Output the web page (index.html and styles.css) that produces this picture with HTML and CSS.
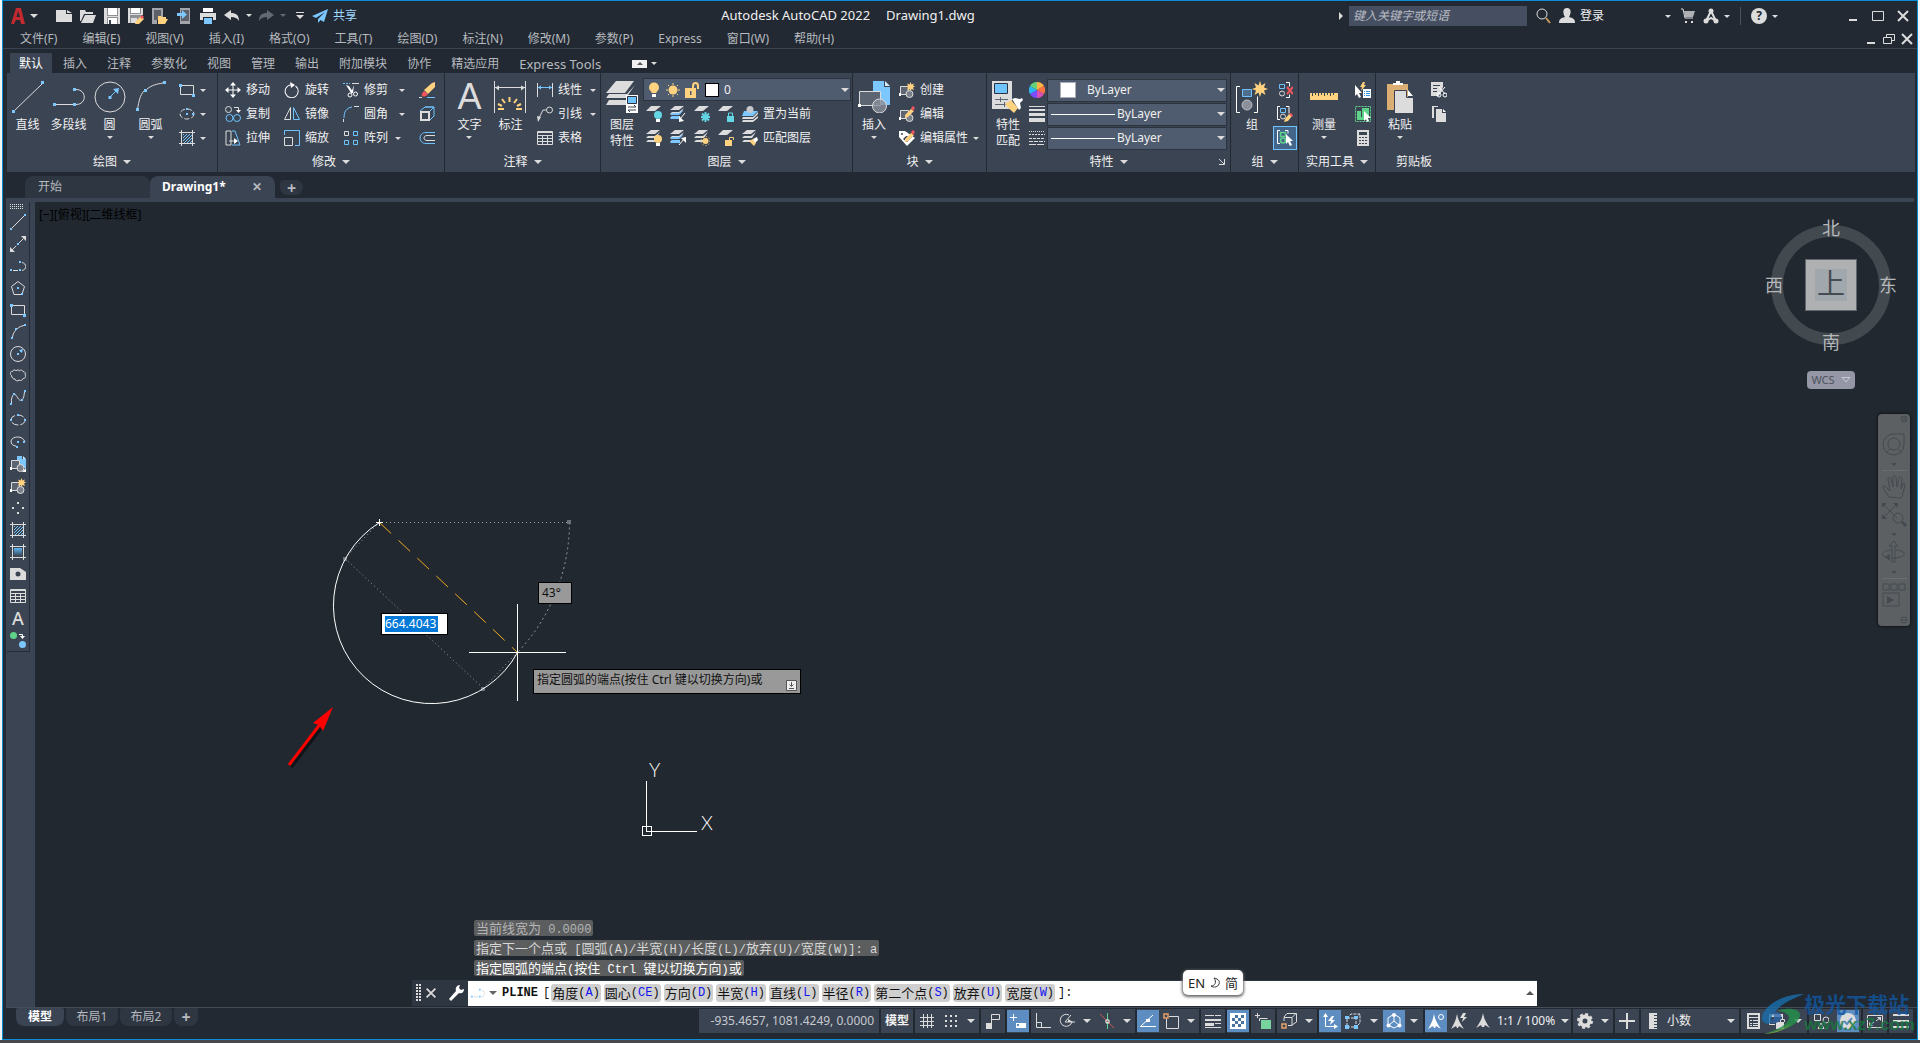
FILE: index.html
```html
<!DOCTYPE html>
<html lang="zh-CN">
<head>
<meta charset="utf-8">
<title>Autodesk AutoCAD 2022 - Drawing1.dwg</title>
<link rel="stylesheet" href="styles.css">
</head>
<body>
<svg class="sprite" aria-hidden="true">
  <defs>
    <linearGradient id="g-grad" x1="0" y1="0" x2="0" y2="1"><stop offset="0" stop-color="#5fb8f5"/><stop offset="1" stop-color="#3b4453"/></linearGradient>
    <pattern id="p-hatch" width="3" height="3" patternUnits="userSpaceOnUse"><path d="M-1 1 1-1M0 3 3 0M2 4 4 2" stroke="#7cc7ff" stroke-width="1"/></pattern>
  </defs>
  <!-- quick access -->
  <symbol id="new" viewBox="0 0 16 16"><path class="fw" d="M0 2h10v4h6v8H0z"/><path class="fw" d="M11 2l5 3h-5z"/></symbol>
  <symbol id="open" viewBox="0 0 16 16"><path class="fw" d="M0 2h5l1 2h7v2H4L1 13H0zM5 7h11l-3 8H1z"/></symbol>
  <symbol id="save" viewBox="0 0 16 16"><path fill="#8d9096" d="M0 0h16v16H0z"/><path class="ff" d="M4 0h9v7H4zM4 10h9v6H4z"/><path fill="#dcdcdc" d="M1 0h2v8h11V0h2v16h-2V9H3v7H0V0z"/><path fill="#3b4453" d="M5 12h2v4H5z"/></symbol>
  <symbol id="saveas" viewBox="0 0 16 16"><path fill="#8d9096" d="M0 0h15v6L9 15H0z"/><path class="ff" d="M3 0h9v5H3z"/><path fill="#dcdcdc" d="M0 0h2v6h11V0h2v7H2v8H0zM3 10h6v5H3z"/><path class="fy" d="M8 13l5-5 3 3-5 5-4 0z"/><path class="fr" d="M12 9l2-2 2 2-2 2z"/></symbol>
  <symbol id="opencloud" viewBox="0 0 16 16"><path class="fg" d="M0 0h11v9H5v7H0z"/><path fill="#5d6068" d="M2 2h7v10H2z"/><path class="fy" d="M6 8h3l1 1h4v2h2l-3 5H6z"/></symbol>
  <symbol id="savecloud" viewBox="0 0 16 16"><path class="fg" d="M4 0h10v16H4z"/><path fill="#5d6068" d="M5 2h8v11H5z"/><path class="fb" d="M1 5h5V2l5 4.500-5 4.500V8H1z"/></symbol>
  <symbol id="print" viewBox="0 0 16 16"><path class="ff" d="M3 0h10v4H3z"/><path class="fw" d="M0 5h16v7h-3V9H3v3H0z"/><path class="fb" d="M4 10h8v6H4z"/></symbol>
  <symbol id="undo" viewBox="0 0 16 16"><path class="fw" d="M0 7l7-5v3c5 0 8 2 8 8-2-3-4-4-8-4v3z"/></symbol>
  <symbol id="redo" viewBox="0 0 16 16"><path fill="#636973" d="M16 7L9 2v3c-5 0-8 2-8 8 2-3 4-4 8-4v3z"/></symbol>
  <symbol id="plane" viewBox="0 0 16 16"><path class="fb" d="M16 1L0 8l4 2L13 4 6 11v4l2.500-3L12 14z"/></symbol>
  <symbol id="appA" viewBox="0 0 16 16"><path fill="#c22a2f" d="M6 0h5l4 16h-4l-1-4H6l-2 4H1zM8 3l-1.500 6H10z"/></symbol>
  <symbol id="mag" viewBox="0 0 16 16"><circle class="s" cx="7" cy="6" r="5"/><path d="M11 10l4 5" stroke="#c9975a" stroke-width="2"/></symbol>
  <symbol id="user" viewBox="0 0 16 16"><path class="fw" d="M8 0c5 0 4 6 2 9 4 1 6 2 6 6H0c0-4 2-5 6-6C4 6 3 0 8 0z"/></symbol>
  <symbol id="cart" viewBox="0 0 16 16"><path class="s" d="M2 1h2l2 9h8"/><path fill="#aeb0b4" d="M5 3h11l-2 6H6z"/><path class="fw" d="M6 13h2v2H6zM12 13h2v2h-2z"/></symbol>
  <symbol id="apps" viewBox="0 0 16 16"><path d="M8 3L3 13M8 3l5 10M3 13l5-3 5 3" fill="none" stroke="#dcdcdc" stroke-width="2"/><circle class="fw" cx="8" cy="3" r="2.500"/><circle class="fw" cx="3" cy="13" r="2.500"/><circle class="fw" cx="13" cy="13" r="2.500"/></symbol>
  <symbol id="min" viewBox="0 0 16 16"><path class="fw" d="M4 11h8v2H4z"/></symbol>
  <symbol id="max" viewBox="0 0 16 16"><path class="s" d="M2.500 3.500h11v9h-11z"/></symbol>
  <symbol id="close" viewBox="0 0 16 16"><path class="s2" d="M3 3l10 10M13 3L3 13"/></symbol>
  <symbol id="restore" viewBox="0 0 16 16"><path class="s" d="M2.500 6.500h8v6h-8zM5.500 6V3.500h8v6H11"/></symbol>
  <!-- draw -->
  <symbol id="line" viewBox="0 0 32 32"><path class="s" d="M3 29L30 3"/><path class="fb" d="M0 29h3v3H0zM29 0h3v3h-3z"/></symbol>
  <symbol id="pline" viewBox="0 0 32 32"><path class="s" d="M3 23.500h17M23 8.500c11 0 11 15 0 15"/><path class="fb" d="M0 22h3v3H0zM20 22h3v3h-3zM20 7h3v3h-3z"/></symbol>
  <symbol id="circle" viewBox="0 0 32 32"><circle class="s" cx="16" cy="16" r="15"/><path class="b" d="M17 15l6-6"/><path class="fb" d="M25 7l-1 6-5-5zM14.500 15h3v3h-3z"/></symbol>
  <symbol id="arc" viewBox="0 0 32 32"><path class="s" d="M2.500 28C4 20 5 14 9 10M12 8C17 4 22 3 28 2"/><path class="fb" d="M1 27h3v3H1zM9 8h3v3H9zM28 0h3v3h-3z"/></symbol>
  <symbol id="rect" viewBox="0 0 16 16"><path class="s" d="M1.500 3.500h13v9h-13z"/><path class="fb" d="M0 2h3v3H0zM13 12h3v3h-3z"/></symbol>
  <symbol id="ellipse" viewBox="0 0 16 16"><ellipse class="s" cx="8" cy="8" rx="7" ry="5" stroke-dasharray="5 2"/><path class="fb" d="M7 7h2v2H7zM7 2h2v2H7zM13 7h2v2h-2z"/></symbol>
  <symbol id="hatch" viewBox="0 0 16 16"><path fill="url(#p-hatch)" d="M4 4h9v9H4z"/><path class="s" d="M2.500 0v16M13.500 0v16M0 2.500h16M0 13.500h16"/></symbol>
  <symbol id="grad" viewBox="0 0 16 16"><path fill="url(#g-grad)" d="M4 4h8v8H4z"/><path class="s" d="M2.500 0v16M13.500 0v16M0 2.500h16M0 13.500h16"/></symbol>
  <!-- modify -->
  <symbol id="move" viewBox="0 0 16 16"><path class="sf" d="M8 2v12M2 8h12"/><path class="ff" d="M8 0l3 3.500H5zM8 16l3-3.500H5zM0 8l3.500-3v6zM16 8l-3.500-3v6z"/></symbol>
  <symbol id="rotate" viewBox="0 0 16 16"><path class="sf" d="M10 3A6.500 6.500 0 1 1 5 3.500" transform="rotate(20 8 8)"/><path class="ff" d="M6 0l5 3-4 3z"/></symbol>
  <symbol id="trim" viewBox="0 0 16 16"><path class="b" d="M0 1.500h7" stroke-dasharray="2 1"/><path class="s" d="M9 1.500h7"/><path class="ff" d="M3 3l3 1 4 6-2 1zM11 3l-1 8H8z"/><circle class="sf" cx="7" cy="13" r="2"/><circle class="sf" cx="12.500" cy="12" r="2"/></symbol>
  <symbol id="erase" viewBox="0 0 16 16"><path class="b" d="M8 15.500h8"/><path class="s" d="M0 15.500h3"/><path class="fy" d="M16 0v5l-7 7-4-4 8-7z"/><path class="fr" d="M5 9l4 3c-2 3-5 3-6 2s0-3 2-5z"/></symbol>
  <symbol id="copy" viewBox="0 0 16 16"><circle class="s" cx="3.500" cy="3.500" r="3"/><circle class="b" cx="4.500" cy="12" r="3.500"/><circle class="b" cx="12" cy="12" r="3.500"/><path class="s" d="M9 1.500h4.500V5"/><path class="ff" d="M11 4h5l-2.500 3z"/></symbol>
  <symbol id="mirror" viewBox="0 0 16 16"><path class="s" d="M6.500 1.500v12h-6z"/><path class="b" d="M9.500 1.500v12h6z"/></symbol>
  <symbol id="fillet" viewBox="0 0 16 16"><path class="b" d="M1 12C1 6 3 2 9 1"/><path class="s" d="M11 .5h5M.5 13v3"/></symbol>
  <symbol id="explode" viewBox="0 0 16 16"><path class="b" d="M1 5l5-4h9v9l-4 4M11 5l4-4M6 1h9"/><path class="s2" d="M2 6h8v8H2z"/></symbol>
  <symbol id="stretch" viewBox="0 0 16 16"><path class="s" d="M1 1h5v14H1zM4 11h6"/><path class="ff" d="M9 8l4 3-4 3z"/><path class="b" d="M7 1h3l5 14H7" /></symbol>
  <symbol id="scale" viewBox="0 0 16 16"><path class="b" d="M.5 5V.5h15v15H11"/><path class="s" d="M.5 7.500h8v8h-8z"/></symbol>
  <symbol id="array" viewBox="0 0 16 16"><path class="s" d="M1.500 1.500h4v4h-4z"/><path class="b" d="M10.500 1.500h4v4h-4zM1.500 10.500h4v4h-4zM10.500 10.500h4v4h-4z"/></symbol>
  <symbol id="offset" viewBox="0 0 16 16"><path class="b" d="M16 2.500H7C-1 2.500-1 13.500 7 13.500h9"/><path class="s" d="M16 5.500H8c-4 0-4 5 0 5h8"/></symbol>
  <!-- annotate -->
  <symbol id="dim" viewBox="0 0 32 32"><path class="s" d="M.5 0v32M31.500 0v32M1 6.500h30"/><path class="fw" d="M1 6.500l4-2v5zM31 6.500l-4-2v5z"/><path d="M15.500 16v5M8 18l3 4M23 18l-3 4M4 23l4 2M27 23l-4 2M4 28h6M22 28h6" stroke="#ffd280" stroke-width="2"/></symbol>
  <symbol id="lin" viewBox="0 0 16 16"><path class="s" d="M.5 1v14M15.500 1v14"/><path class="b" d="M1 5.500h14"/><path class="fb" d="M1 5.500l3-2v4zM15 5.500l-3-2v4z"/></symbol>
  <symbol id="leader" viewBox="0 0 16 16"><circle class="s" cx="12.500" cy="4" r="3"/><path class="s" d="M9 4H6L2 12"/><path class="fw" d="M0 10l4 1-3 5z"/></symbol>
  <symbol id="table" viewBox="0 0 16 16"><path class="s" d="M.5 1.500h15v13H.5zM0 5.500h16M0 8.500h16M0 11.500h16M5.500 5v9M10.500 5v9"/><path class="fw" d="M1 2h14v1H1z"/></symbol>
  <!-- layers -->
  <symbol id="layers" viewBox="0 0 32 32"><path class="fw" d="M10 0h18l-9 12H0zM3 13h18l8-9-9 13H0zM3 19h18v5H0z"/><path class="ff" d="M20 14h12v18H20z"/><path fill="#6fc3ff" stroke="#2b3340" d="M21.500 15.500h9v7h-9z"/><path d="M22 26h8l-2-2M30 29h-8l2 2" fill="none" stroke="#3b4453"/></symbol>
  <symbol id="ly" viewBox="0 0 16 16"><path class="fw" d="M5 0h10l-6 5H0z"/></symbol>
  <symbol id="ly3" viewBox="0 0 16 16"><path class="fw" d="M5 0h9L9 4H0zM2 6h7l5-4-4 6H0zM2 10h7v2H0z"/></symbol>
  <symbol id="ly1" viewBox="0 0 16 16"><use href="#ly"/><circle fill="#63d5e3" cx="12" cy="9" r="4"/><path class="ff" d="M10 13h4v3h-4z"/></symbol>
  <symbol id="ly2" viewBox="0 0 16 16"><use href="#ly3"/><path class="fb" d="M2 7h7l4-3v1L9 9H0zM2 10h8v3H0z"/><path class="sf" d="M15 7l-5 6"/><path class="ff" d="M9 10v6l5-1z"/></symbol>
  <symbol id="ly4" viewBox="0 0 16 16"><use href="#ly"/><path d="M11.500 6v10M7 11h9M8 7.500l7 7M15 7.500l-7 7" stroke="#63d5e3" stroke-width="2"/></symbol>
  <symbol id="ly5" viewBox="0 0 16 16"><use href="#ly"/><path fill="#63d5e3" d="M9 10h7v6H9z"/><path fill="none" stroke="#63d5e3" d="M10.500 10V7h4v3"/></symbol>
  <symbol id="ly6" viewBox="0 0 16 16"><path class="fb" d="M2 5h14l-5 5H0z"/><path class="fw" d="M1 11h10l5-5v2l-5 5H0zM1 14h10l5-4v2l-5 4H0z"/><circle fill="#c4c7cc" cx="8" cy="3.500" r="3.500"/></symbol>
  <symbol id="ly7" viewBox="0 0 16 16"><use href="#ly3"/><circle class="fy" cx="12" cy="9" r="4"/><path class="ff" d="M10 13h4v3h-4z"/></symbol>
  <symbol id="ly8" viewBox="0 0 16 16"><use href="#ly3"/><path class="fb" d="M2 7h7l4-3v1L9 9H0zM2 10h8v3H0z"/><path class="sf" d="M9 15l5-6"/><path class="ff" d="M16 7v6l-5-5z"/></symbol>
  <symbol id="ly9" viewBox="0 0 16 16"><use href="#ly3"/><circle class="fy" cx="11.500" cy="11" r="3"/><circle cx="11.500" cy="11" r="4.500" fill="none" stroke="#ffd280" stroke-dasharray="1 2"/></symbol>
  <symbol id="ly10" viewBox="0 0 16 16"><use href="#ly"/><path class="fy" d="M7 10h7v6H7z"/><path fill="none" stroke="#ffd280" d="M11.500 10V7.500h4V10"/></symbol>
  <symbol id="ly11" viewBox="0 0 16 16"><use href="#ly3"/><path class="fy" d="M7 11l4-2 3 4-2 3z"/><path class="ff" d="M11 9l4-2 1 3-3 3z"/></symbol>
  <symbol id="bulb" viewBox="0 0 16 16"><circle class="fy" cx="8" cy="5.500" r="5"/><path class="fy" d="M5.500 9h5v2h-5z"/><path class="ff" d="M6 12h4v3H6z"/></symbol>
  <symbol id="sun" viewBox="0 0 16 16"><circle class="fy" cx="8" cy="8" r="4.500"/><path d="M8 1v2M8 13v2M1 8h2M13 8h2M3 3l1 1M12 12l1 1M13 3l-1 1M4 12l-1 1" stroke="#ffd280" stroke-width="1"/></symbol>
  <symbol id="unlock" viewBox="0 0 16 16"><path class="fy" d="M1 6h11v10H1z"/><path d="M9 6V4c0-4 5-4 5 0v3" fill="none" stroke="#ffd280" stroke-width="2"/><path fill="#4f5b6e" d="M6 9h1.500v4H6z"/></symbol>
  <!-- blocks -->
  <symbol id="insert" viewBox="0 0 32 32"><path class="fb" d="M15 0h11v6h6v18H15z"/><path fill="#d3ebff" d="M27 0l5 5h-5z"/><path fill="#5d6573" stroke="#dcdcdc" d="M1.500 10.500h21v14h-21z"/><circle fill="#8b909a" fill-opacity=".8" stroke="#dcdcdc" cx="21.500" cy="25" r="7"/><path class="ff" d="M0 23h3v3H0z"/></symbol>
  <symbol id="blk" viewBox="0 0 16 16"><path fill="#5d6573" stroke="#dcdcdc" d="M1.500 4.500h8v8h-8z"/><circle fill="#7a808a" stroke="#dcdcdc" cx="10.500" cy="12" r="3.500"/><path class="ff" d="M0 11h2v3H0z"/></symbol>
  <symbol id="bcreate" viewBox="0 0 16 16"><use href="#blk"/><path class="fy" d="M11.500 0l1 2.500L15 1.500l-1 2 2 1-2 1 1 2.500-2.500-1-1 2-1-2-2.500 1 1-2.500-2-1 2-1-1-2 2.500 1z"/></symbol>
  <symbol id="bedit" viewBox="0 0 16 16"><use href="#blk"/><path class="fy" d="M6 9l6-6 3 2-6 6-3 1z"/><path class="fr" d="M12 2l2-2 2 2-2 3z"/></symbol>
  <symbol id="battr" viewBox="0 0 16 16"><path class="ff" d="M0 1h6l10 7-8 8-8-9z"/><circle fill="#3b4453" cx="3" cy="4" r="1"/><path fill="#3b4453" d="M4 9l3-3 6 1-5 5z"/><path class="fy" d="M6 9l6-6 3 2-6 6-3 1z"/><path class="fr" d="M12 2l2-2 2 2-2 3z"/></symbol>
  <symbol id="binsert" viewBox="0 0 16 16"><path class="fb" d="M7 0h5v3h4v9H9V5H7z"/><path fill="#d3ebff" d="M13 0l3 3h-3z"/><use href="#blk"/><path class="ff" d="M16 12v4h-4z"/></symbol>
  <!-- properties -->
  <symbol id="match" viewBox="0 0 32 32"><path class="fw" d="M0 0h20v28H0z"/><path fill="#6fc3ff" stroke="#2b3340" d="M2.500 2.500h13v10h-13z"/><path d="M3 18.500h13M3 23.500h13M8.500 16v5M12.500 21v5" stroke="#5d6573"/><path class="fy" d="M13 23l6-4 7 8-4 5c-3-3-6-5-9-9z"/><path class="ff" d="M20 18l3-1 5 1 2-1 1 2-3 3 1 5-2 2z"/></symbol>
  <symbol id="wheel" viewBox="0 0 16 16"><path fill="#ffb347" d="M8 8V0a8 8 0 0 1 7 4z"/><path fill="#ff7043" d="M8 8l7-4a8 8 0 0 1 0 8z"/><path fill="#d94fb5" d="M8 8l7 4a8 8 0 0 1-7 4z"/><path fill="#7c4dff" d="M8 8v8a8 8 0 0 1-7-4z"/><path fill="#29b6f6" d="M8 8l-7 4a8 8 0 0 1 0-8z"/><path fill="#66d07a" d="M8 8L1 4a8 8 0 0 1 7-4z"/></symbol>
  <symbol id="lw" viewBox="0 0 16 16"><path class="fw" d="M0 0h16v1H0zM0 3h16v2H0zM0 7h16v3H0zM0 12h16v4H0z"/></symbol>
  <symbol id="lt" viewBox="0 0 16 16"><path class="s" d="M0 1.500h16" stroke-dasharray="1 1"/><path class="s" d="M0 4.500h16" stroke-dasharray="2 1"/><path class="s" d="M0 8.500h16" stroke-dasharray="3 1"/><path class="s" d="M0 11.500h16" stroke-dasharray="4 1"/><path class="s" d="M0 14.500h16" stroke-dasharray="7 1"/></symbol>
  <symbol id="launcher" viewBox="0 0 8 8"><path class="s" d="M1 1l5 5M6.500 1v5.500H1"/></symbol>
  <!-- groups -->
  <symbol id="group" viewBox="0 0 32 32"><path class="sf" d="M4 5.500H.5v26H4M18 31.500h3.500v-16"/><path fill="#4f6e8e" stroke="#6fc3ff" d="M6.500 8.500h9v7h-9z"/><circle fill="#8b909a" stroke="#b9bcc2" cx="11" cy="24" r="5"/><path class="fy" d="M24 0l1.500 4.500L29.500 2 28 6.500 32 8l-4 1.500 1.500 4.500-4-2.500L24 16l-1.500-4.500-4 2.500L20 9.500 16 8l4-1.500L18.500 2l4 2.500z"/></symbol>
  <symbol id="ungroup" viewBox="0 0 16 16"><path class="sf" d="M9 .5h3.500v4M9 15.500h3.500v-3"/><path class="b" d="M2.500 2.500h5v4h-5z"/><circle class="s" cx="5" cy="11.500" r="2.500"/><path d="M10 5l6 7M16 5l-6 7" stroke="#f0565c" stroke-width="2"/></symbol>
  <symbol id="gedit" viewBox="0 0 16 16"><path class="sf" d="M3 .5H.5v13H3M9 .5h3v7"/><path class="b" d="M3.500 2.500h5v4h-5z"/><circle class="s" cx="6" cy="10.500" r="2.500"/><path class="fy" d="M8 13l4-5 3 2-4 5-4 1z"/><path class="fr" d="M12 8l2-1 2 2-1 2z"/></symbol>
  <symbol id="gsel" viewBox="0 0 16 16"><path class="sf" d="M3 .5H.5v13H3M8 .5h3v3"/><path fill="none" stroke="#5fd38a" stroke-width="1.500" d="M3.500 2.500h5v4h-5z"/><circle fill="none" stroke="#5fd38a" stroke-width="1.500" cx="6" cy="10.500" r="2.500"/><path class="ff" d="M9 4l7 7-3 0 2 4-2 1-2-4-2 2z"/></symbol>
  <!-- utilities, clipboard -->
  <symbol id="ruler" viewBox="0 0 28 32"><path class="fy" d="M0 12h28v7H0z"/><path d="M2.500 12v3M5.500 12v2M8.500 12v3M11.500 12v2M14.500 12v3M17.500 12v2M20.500 12v3M23.500 12v2" stroke="#3b4453"/></symbol>
  <symbol id="qsel" viewBox="0 0 16 16"><path class="fy" d="M8 0l-3 5h2l-1 4 5-6H9l1-3z"/><path class="ff" d="M0 3l7 8-3 0 2 4-2 1-2-4-2 2zM8 7h8v9H8z"/><path d="M9 9.500h1M11 9.500h4M9 11.500h1M11 11.500h4M9 13.500h1M11 13.500h4" stroke="#3293dd"/></symbol>
  <symbol id="selall" viewBox="0 0 16 16"><path fill="none" stroke="#5fd38a" stroke-dasharray="2 1" d="M.5.5h15v15H.5z"/><path fill="#5fd38a" d="M7 2h7v9H7zM2 5h4v6h5v3H2z"/><path class="ff" d="M9 5l7 7-3 0 1 3-2 1-1-3-2 2z"/></symbol>
  <symbol id="calc" viewBox="0 0 16 16"><path class="fw" d="M2 0h12v16H2z"/><path fill="#3b4453" d="M4 2h8v3H4zM4 7h2v1H4zM7 7h2v1H7zM10 7h2v1h-2zM4 10h2v1H4zM7 10h2v1H7zM10 10h2v1h-2zM4 13h2v1H4zM7 13h2v1H7zM10 13h2v1h-2z"/></symbol>
  <symbol id="paste" viewBox="0 0 32 32"><path fill="#dbae74" d="M3 3h21v26H3z"/><path class="ff" d="M9 4V2h3V0h4v2h3v2z"/><path class="fw" stroke="#3b4453" d="M10.500 9.500h12v7h7v16h-19z"/><path class="ff" d="M24 9l5 6h-5z"/></symbol>
  <symbol id="cut" viewBox="0 0 16 16"><path class="fw" d="M0 0h12v5l-4 9H0z"/><path d="M2 3.500h7M2 6.500h4M2 9.500h4" stroke="#3b4453"/><path class="sf" d="M8 5l6 7M14 5l-6 7"/><circle class="sf" cx="8" cy="13" r="2"/><circle class="sf" cx="14" cy="13" r="2"/></symbol>
  <symbol id="copyclip" viewBox="0 0 16 16"><path class="fw" d="M1 0h6v1H3v11H1z"/><path class="fw" d="M5 3h6v4h4v9H5z"/><path class="ff" d="M12 3l3 3h-3z"/></symbol>
  <!-- draw toolbar -->
  <symbol id="t-line" viewBox="0 0 16 16"><path class="s" d="M2 14L14 2"/><path class="fb" d="M0 14h2v2H0zM14 0h2v2h-2z"/></symbol>
  <symbol id="t-xline" viewBox="0 0 16 16"><path class="s" d="M2 14L14 2" stroke-dasharray="6 4"/><path class="fw" d="M0 16v-5l5 5zM16 0v5l-5-5z"/><path class="fb" d="M7 7h2v2H7z"/></symbol>
  <symbol id="t-pline" viewBox="0 0 16 16"><path class="s" d="M3 12.500h5M12 4.500c5 1 5 7 0 8"/><path class="fb" d="M0 11h2v2H0zM9 11h2v2H9zM9 3h2v2H9z"/></symbol>
  <symbol id="t-poly" viewBox="0 0 16 16"><path class="s" d="M8 1.500l6.500 5-2.500 8H4l-2.500-8z"/><path class="fb" d="M7 7h2v2H7zM11 13h2v2h-2z"/></symbol>
  <symbol id="t-arc" viewBox="0 0 16 16"><path class="s" d="M2.500 13C3 10 4 8 6 6M7 5c2-2 4-3 7-3.500"/><path class="fb" d="M1 13h2v2H1zM5 4h2v2H5zM14 0h2v2h-2z"/></symbol>
  <symbol id="t-circle" viewBox="0 0 16 16"><circle class="s" cx="8" cy="8" r="7.500"/><path class="b" d="M10 6l2-2"/><path class="fb" d="M7 7h2v2H7zM13 3l-1 4-3-3z"/></symbol>
  <symbol id="t-cloud" viewBox="0 0 16 16"><path class="s" d="M1.500 7.500C-.5 6 0 3 2.500 3.500c.5-2 3-2 3.500-.5 1-1.500 3-1.500 3.500 0 1-1.500 3-1 3.500.500 2 0 3 2 2 3.500 1.500 1.500 0 3.500-2 3.500-.5 2-2.500 2.500-4 1.500-1 1.500-4 1-4-1-2 0-3-1-2.500-2-1.500 0-1.500-1-1-1.500z"/></symbol>
  <symbol id="t-spline" viewBox="0 0 16 16"><path class="s" d="M1.500 13C1 9 2 6 4 4c3 0 4 8 8 6 2-2 2-5 2.500-8"/><path class="fb" d="M0 13h2v2H0zM3 3h2v2H3zM11 9h2v2h-2zM14 0h2v2h-2z"/></symbol>
  <symbol id="t-ell" viewBox="0 0 16 16"><ellipse class="s" cx="8" cy="8" rx="7" ry="5" stroke-dasharray="7 2"/><path class="fb" d="M0 7h2v2H0zM14 7h2v2h-2zM7 2h2v2H7z"/></symbol>
  <symbol id="t-ellarc" viewBox="0 0 16 16"><path class="s" d="M15 8C13 1 2 2 1 7c0 3 2 5 5 5"/><path class="fb" d="M7 7h2v2H7zM13 7h2v2h-2zM6 12h2v2H6z"/></symbol>
  <symbol id="t-point" viewBox="0 0 16 16"><path class="fw" d="M7 2h2v2H7zM2 7h2v2H2zM12 7h2v2h-2zM7 12h2v2H7z"/></symbol>
  <symbol id="t-region" viewBox="0 0 16 16"><path class="fw" d="M0 2h10l6 4v8H0z"/><circle fill="#3b4453" cx="8" cy="8" r="2.500"/></symbol>
  <symbol id="t-add" viewBox="0 0 16 16"><circle fill="#5fd38a" cx="3.500" cy="3.500" r="3.500"/><circle fill="#7cc7ff" cx="12.500" cy="12.500" r="3.500"/><path class="sf" d="M9 2.500h3.500V5"/><path class="ff" d="M10 4h5l-2.500 3z"/></symbol>
  <!-- status bar -->
  <symbol id="s-grid" viewBox="0 0 16 16"><path class="s" d="M4.500 1v14M8.500 1v14M12.500 1v14M1 4.500h14M1 8.500h14M1 12.500h14"/></symbol>
  <symbol id="s-snap" viewBox="0 0 16 16"><path class="fw" d="M2 2h2v2H2zM7 2h2v2H7zM12 2h2v2h-2zM2 7h2v2H2zM7 7h2v2H7zM12 7h2v2h-2zM2 12h2v2H2zM7 12h2v2H7zM12 12h2v2h-2z"/></symbol>
  <symbol id="s-infer" viewBox="0 0 16 16"><path class="fw" d="M1 10h6v6H1z"/><path class="s" d="M6.500 10V1.500h8v5h-8"/></symbol>
  <symbol id="s-dyn" viewBox="0 0 16 16"><path class="sf" d="M3.500 1v7M0 4.500h7"/><path class="ff" d="M6 10h10v5H6z"/><path fill="#5e8dc1" d="M7 11h2v2H7z"/></symbol>
  <symbol id="s-ortho" viewBox="0 0 16 16"><path class="s" d="M1.500 0v14.500H16M1.500 9.500h5v5"/></symbol>
  <symbol id="s-polar" viewBox="0 0 16 16"><path class="s" d="M13 9a6 6 0 1 1-3-7M6 9h10M6 9l6-7"/><path class="fw" d="M9 6l5 3H9z"/></symbol>
  <symbol id="s-iso" viewBox="0 0 16 16"><path d="M1 1l14 14" stroke="#d05757"/><path d="M8.500 0v7M8.500 9v7" stroke="#5fd38a"/><path class="sf" d="M7 7h3v3H7z"/></symbol>
  <symbol id="s-otrack" viewBox="0 0 16 16"><path class="sf" d="M0 13.500h16M1 13L13 2"/><path class="ff" d="M6 6h4v3H6z"/></symbol>
  <symbol id="s-osnap" viewBox="0 0 16 16"><path class="s" d="M6 3.500h9.500v12h-12V6"/><path fill="none" stroke="#e8a06b" stroke-width="1.500" d="M1 1h4v4H1z"/></symbol>
  <symbol id="s-lw" viewBox="0 0 16 16"><path class="fw" d="M0 2h9v1H0zM10 2h6v1h-6zM0 6h16v2H0zM0 10h9v3H0zM10 10h6v1h-6zM0 14h16v1H0z"/></symbol>
  <symbol id="s-trans" viewBox="0 0 16 16"><path class="ff" d="M0 0h16v16H0z"/><path fill="#49739f" d="M5 2h3v3H5zM11 2h3v3h-3zM2 5h3v3H2zM8 5h3v3H8zM5 8h3v3H5zM11 8h3v3h-3zM2 11h3v3H2zM8 11h3v3H8z"/></symbol>
  <symbol id="s-cycle" viewBox="0 0 16 16"><path class="s" d="M2.500 0v5M0 2.500h5M4.500 8V5.500h8"/><path fill="#76d49c" d="M6 7h10v9H6z"/></symbol>
  <symbol id="s-3dos" viewBox="0 0 16 16"><path class="s" d="M3 8V4.500h8v8H7M3 4l3-3.500h9.500V9L11 12M11 4.500l4-4"/><path fill="none" stroke="#e8a06b" stroke-width="1.500" d="M1 11h4v4H1z"/></symbol>
  <symbol id="s-ucs" viewBox="0 0 16 16"><path class="sf" d="M3.500 2v11.500H14"/><path class="ff" d="M3.500 0L6 4H1zM16 13.500l-4-2.500v5zM10 3L6 8h3l-1 4 5-5h-3l2-4z"/></symbol>
  <symbol id="s-selfil" viewBox="0 0 16 16"><path class="s" d="M2 5h9v9H2zM2 5l4-4h9v9l-4 4M11 5l4-4" stroke-dasharray="3 1"/><path class="fb" d="M0 3h4v3H0zM9 3h4v3H9zM0 12h4v4H0zM9 12h4v4H9z"/></symbol>
  <symbol id="s-gizmo" viewBox="0 0 16 16"><path class="sf" d="M8 1l6 4v7l-6 3-6-3V5zM8 2v6l-5 4M8 8l5 4"/><circle class="ff" cx="8" cy="2" r="2"/><circle class="ff" cx="2.500" cy="12.500" r="2"/><circle class="ff" cx="13.500" cy="12.500" r="2"/></symbol>
  <symbol id="s-ann" viewBox="0 0 16 16"><path class="fw" d="M8 0c1 4 1 7 7 15l-5-3-1 2H7l-1-2-5 3c6-8 6-11 7-15z"/></symbol>
  <symbol id="s-annv" viewBox="0 0 16 16"><path class="ff" d="M6 1c1 4 1 6 7 15l-5-3-1 2H6l-1-2-5 3C5 8 5 5 6 1z"/><circle class="sf" cx="13" cy="4" r="2.500"/></symbol>
  <symbol id="s-anna" viewBox="0 0 16 16"><path class="fw" d="M6 1c1 4 1 6 7 15l-5-3-1 2H6l-1-2-5 3C5 8 5 5 6 1zM12 0L9 5h3l-1 4 5-5h-3l2-4z"/></symbol>
  <symbol id="s-gear" viewBox="0 0 16 16"><circle cx="8" cy="8" r="4.500" fill="none" stroke="#dcdcdc" stroke-width="4"/><circle cx="8" cy="8" r="7" fill="none" stroke="#dcdcdc" stroke-width="2" stroke-dasharray="3 2.500"/></symbol>
  <symbol id="s-plus" viewBox="0 0 16 16"><path class="s2" d="M8 0v16M0 8h16"/></symbol>
  <symbol id="s-rule" viewBox="0 0 16 16"><path class="fw" d="M4 0h8v2H9v1h3v2H9v1h3v2H9v1h3v2H9v1h3v2H9v1h3v1H4z"/></symbol>
  <symbol id="s-qp" viewBox="0 0 16 16"><path class="s2" d="M3 1h11v14H3z"/><path class="s" d="M3 4.500h11M5 7.500h2M8 7.500h5M5 10.500h2M8 10.500h5M5 12.500h2M8 12.500h5"/></symbol>
  <symbol id="s-lock" viewBox="0 0 16 16"><path class="s" d="M6 11.500H.5V1.500h13V6"/><path class="fw" d="M0 1h14v3H0zM7 9h8v7H7z"/><path class="s" d="M11.500 9V6.500h4V9"/></symbol>
  <symbol id="s-iso2" viewBox="0 0 16 16"><path class="s" d="M1.500 1.500h6v6h-6zM5 15.500h6L8 10z"/><circle class="s" cx="13" cy="7" r="3"/></symbol>
  <symbol id="s-hw" viewBox="0 0 16 16"><circle class="fw" cx="8" cy="8" r="8"/><path d="M4 8l3 3 5-6" fill="none" stroke="#5e8dc1" stroke-width="2"/></symbol>
  <symbol id="s-full" viewBox="0 0 16 16"><path class="s" d="M.5 2.500h15v12H.5zM3 12l4-3M13 5L9 8"/><path class="fw" d="M2 9v4h4zM14 8V4h-4z"/></symbol>
  <symbol id="s-menu" viewBox="0 0 16 16"><path class="fw" d="M0 1h16v2H0zM0 7h16v2H0zM0 13h16v2H0z"/></symbol>
  <symbol id="wrench" viewBox="0 0 16 16"><path class="ff" d="M1 14l7-8c-1-3 1-6 4-6l-1 3 2 2 3-1c0 3-2 5-5 4l-8 8z"/></symbol>
</svg>

<div class="window">
  <header class="titlebar">
    <div class="quick">
      <button class="ib app" aria-label="应用程序菜单"><svg><use href="#appA"/></svg><i class="dd lg"></i></button>
      <button class="ib" aria-label="新建"><svg><use href="#new"/></svg></button>
      <button class="ib" aria-label="打开"><svg><use href="#open"/></svg></button>
      <button class="ib" aria-label="保存"><svg><use href="#save"/></svg></button>
      <button class="ib" aria-label="另存为"><svg><use href="#saveas"/></svg></button>
      <button class="ib" aria-label="从云打开"><svg><use href="#opencloud"/></svg></button>
      <button class="ib" aria-label="保存到云"><svg><use href="#savecloud"/></svg></button>
      <button class="ib" aria-label="打印"><svg><use href="#print"/></svg></button>
      <button class="ib undo" aria-label="放弃"><svg><use href="#undo"/></svg><i class="dd"></i></button>
      <button class="ib undo" aria-label="重做"><svg><use href="#redo"/></svg><i class="dd dim"></i></button>
      <button class="ib more" aria-label="自定义快速访问工具栏"><i class="dd lg bar"></i></button>
      <button class="ib share"><svg><use href="#plane"/></svg>共享</button>
    </div>
    <h1 class="title"><span>Autodesk AutoCAD 2022</span><span>Drawing1.dwg</span></h1>
    <div class="account">
      <i class="rt"></i>
      <input class="search" type="search" placeholder="键入关键字或短语" aria-label="搜索">
      <button class="ib" aria-label="查找"><svg><use href="#mag"/></svg></button>
      <button class="ib login"><svg><use href="#user"/></svg>登录<i class="dd"></i></button>
      <button class="ib" aria-label="商店"><svg><use href="#cart"/></svg></button>
      <button class="ib appst" aria-label="应用"><svg><use href="#apps"/></svg><i class="dd"></i></button>
      <span class="vsep"></span>
      <button class="ib help"><b>?</b><i class="dd"></i></button>
      <div class="winbtns">
        <button class="ib" aria-label="最小化"><svg><use href="#min"/></svg></button>
        <button class="ib" aria-label="最大化"><svg><use href="#max"/></svg></button>
        <button class="ib" aria-label="关闭"><svg><use href="#close"/></svg></button>
      </div>
    </div>
  </header>

  <nav class="menubar">
    <button>文件(F)</button><button>编辑(E)</button><button>视图(V)</button><button>插入(I)</button><button>格式(O)</button><button>工具(T)</button><button>绘图(D)</button><button>标注(N)</button><button>修改(M)</button><button>参数(P)</button><button>Express</button><button>窗口(W)</button><button>帮助(H)</button>
    <div class="docbtns">
      <button aria-label="最小化图形"><svg><use href="#min"/></svg></button>
      <button aria-label="还原图形"><svg><use href="#restore"/></svg></button>
      <button aria-label="关闭图形"><svg><use href="#close"/></svg></button>
    </div>
  </nav>

  <nav class="tabs">
    <button class="on">默认</button><button>插入</button><button>注释</button><button>参数化</button><button>视图</button><button>管理</button><button>输出</button><button>附加模块</button><button>协作</button><button>精选应用</button><button class="wide">Express Tools</button>
    <button class="fold" aria-label="最小化功能区"><span><i class="up"></i></span><i class="dd"></i></button>
  </nav>

  <section class="ribbon">
    <div class="panel p-draw">
      <div class="pbody">
        <button class="big"><svg><use href="#line"/></svg>直线</button>
        <button class="big"><svg><use href="#pline"/></svg>多段线</button>
        <button class="big"><svg><use href="#circle"/></svg>圆<i class="dd"></i></button>
        <button class="big"><svg><use href="#arc"/></svg>圆弧<i class="dd"></i></button>
        <div class="col">
          <button class="tool" aria-label="矩形"><svg><use href="#rect"/></svg><i class="dd"></i></button>
          <button class="tool" aria-label="椭圆"><svg><use href="#ellipse"/></svg><i class="dd"></i></button>
          <button class="tool" aria-label="图案填充"><svg><use href="#hatch"/></svg><i class="dd"></i></button>
        </div>
      </div>
      <button class="ptitle">绘图<i class="dd lg"></i></button>
    </div>
    <div class="panel p-modify">
      <div class="pbody">
        <div class="col"><button class="tool"><svg><use href="#move"/></svg>移动</button><button class="tool"><svg><use href="#copy"/></svg>复制</button><button class="tool"><svg><use href="#stretch"/></svg>拉伸</button></div>
        <div class="col"><button class="tool"><svg><use href="#rotate"/></svg>旋转</button><button class="tool"><svg><use href="#mirror"/></svg>镜像</button><button class="tool"><svg><use href="#scale"/></svg>缩放</button></div>
        <div class="col c-drop"><button class="tool"><svg><use href="#trim"/></svg>修剪<i class="dd"></i></button><button class="tool"><svg><use href="#fillet"/></svg>圆角<i class="dd"></i></button><button class="tool near"><svg><use href="#array"/></svg>阵列<i class="dd"></i></button></div>
        <div class="col"><button class="tool" aria-label="删除"><svg><use href="#erase"/></svg></button><button class="tool" aria-label="分解"><svg><use href="#explode"/></svg></button><button class="tool" aria-label="偏移"><svg><use href="#offset"/></svg></button></div>
      </div>
      <button class="ptitle">修改<i class="dd lg"></i></button>
    </div>
    <div class="panel p-anno">
      <div class="pbody">
        <button class="big"><span class="letter">A</span>文字<i class="dd"></i></button>
        <button class="big"><svg><use href="#dim"/></svg>标注</button>
        <div class="col c-anno"><button class="tool"><svg><use href="#lin"/></svg>线性<i class="dd"></i></button><button class="tool"><svg><use href="#leader"/></svg>引线<i class="dd"></i></button><button class="tool"><svg><use href="#table"/></svg>表格</button></div>
      </div>
      <button class="ptitle">注释<i class="dd lg"></i></button>
    </div>
    <div class="panel p-layer">
      <div class="pbody">
        <button class="big"><svg><use href="#layers"/></svg>图层<br>特性</button>
        <div class="col c-layer">
          <div class="combo"><svg><use href="#bulb"/></svg><svg><use href="#sun"/></svg><svg><use href="#unlock"/></svg><span class="sw black"></span><select aria-label="图层"><option>0</option></select><i class="dd lg"></i></div>
          <div class="row"><button class="tool" aria-label="关闭图层"><svg><use href="#ly1"/></svg></button><button class="tool" aria-label="隔离"><svg><use href="#ly2"/></svg></button><button class="tool" aria-label="冻结"><svg><use href="#ly4"/></svg></button><button class="tool" aria-label="锁定"><svg><use href="#ly5"/></svg></button><button class="tool"><svg><use href="#ly6"/></svg>置为当前</button></div>
          <div class="row"><button class="tool" aria-label="打开图层"><svg><use href="#ly7"/></svg></button><button class="tool" aria-label="取消隔离"><svg><use href="#ly8"/></svg></button><button class="tool" aria-label="解冻"><svg><use href="#ly9"/></svg></button><button class="tool" aria-label="解锁"><svg><use href="#ly10"/></svg></button><button class="tool"><svg><use href="#ly11"/></svg>匹配图层</button></div>
        </div>
      </div>
      <button class="ptitle">图层<i class="dd lg"></i></button>
    </div>
    <div class="panel p-block">
      <div class="pbody">
        <button class="big"><svg><use href="#insert"/></svg>插入<i class="dd"></i></button>
        <div class="col"><button class="tool"><svg><use href="#bcreate"/></svg>创建</button><button class="tool"><svg><use href="#bedit"/></svg>编辑</button><button class="tool"><svg><use href="#battr"/></svg>编辑属性<i class="dd"></i></button></div>
      </div>
      <button class="ptitle">块<i class="dd lg"></i></button>
    </div>
    <div class="panel p-prop">
      <div class="pbody">
        <button class="big"><svg><use href="#match"/></svg>特性<br>匹配</button>
        <div class="col c-prop">
          <div class="row"><svg><use href="#wheel"/></svg><div class="combo"><span class="sw color"></span><select aria-label="对象颜色"><option>ByLayer</option></select><i class="dd lg"></i></div></div>
          <div class="row"><svg><use href="#lw"/></svg><div class="combo"><span class="rule"></span><select aria-label="线宽"><option>ByLayer</option></select><i class="dd lg"></i></div></div>
          <div class="row"><svg><use href="#lt"/></svg><div class="combo"><span class="rule"></span><select aria-label="线型"><option>ByLayer</option></select><i class="dd lg"></i></div></div>
        </div>
      </div>
      <button class="ptitle">特性<i class="dd lg"></i></button>
      <svg class="launch"><use href="#launcher"/></svg>
    </div>
    <div class="panel p-group">
      <div class="pbody">
        <button class="big"><svg><use href="#group"/></svg>组</button>
        <div class="col"><button class="tool" aria-label="解除编组"><svg><use href="#ungroup"/></svg></button><button class="tool" aria-label="组编辑"><svg><use href="#gedit"/></svg></button><button class="tool sel" aria-label="组选择"><svg><use href="#gsel"/></svg></button></div>
      </div>
      <button class="ptitle">组<i class="dd lg"></i></button>
    </div>
    <div class="panel p-util">
      <div class="pbody">
        <button class="big"><svg><use href="#ruler"/></svg>测量<i class="dd"></i></button>
        <div class="col"><button class="tool" aria-label="快速选择"><svg><use href="#qsel"/></svg></button><button class="tool" aria-label="全部选择"><svg><use href="#selall"/></svg></button><button class="tool" aria-label="计算器"><svg><use href="#calc"/></svg></button></div>
      </div>
      <button class="ptitle">实用工具<i class="dd lg"></i></button>
    </div>
    <div class="panel p-clip">
      <div class="pbody">
        <button class="big"><svg><use href="#paste"/></svg>粘贴<i class="dd"></i></button>
        <div class="col"><button class="tool" aria-label="剪切"><svg><use href="#cut"/></svg></button><button class="tool" aria-label="复制裁剪"><svg><use href="#copyclip"/></svg></button></div>
      </div>
      <span class="ptitle">剪贴板</span>
    </div>
  </section>

  <nav class="doctabs">
    <button class="dtab">开始</button>
    <button class="dtab cur">Drawing1*<span>✕</span></button>
    <button class="dplus" aria-label="新图形">+</button>
  </nav>

  <main class="work">
    <aside class="dock">
      <div class="palette">
        <span class="grip"></span>
        <button aria-label="直线"><svg><use href="#t-line"/></svg></button>
        <button aria-label="构造线"><svg><use href="#t-xline"/></svg></button>
        <button aria-label="多段线"><svg><use href="#t-pline"/></svg></button>
        <button aria-label="多边形"><svg><use href="#t-poly"/></svg></button>
        <button aria-label="矩形"><svg><use href="#rect"/></svg></button>
        <button aria-label="圆弧"><svg><use href="#t-arc"/></svg></button>
        <button aria-label="圆"><svg><use href="#t-circle"/></svg></button>
        <button aria-label="修订云线"><svg><use href="#t-cloud"/></svg></button>
        <button aria-label="样条曲线"><svg><use href="#t-spline"/></svg></button>
        <button aria-label="椭圆"><svg><use href="#t-ell"/></svg></button>
        <button aria-label="椭圆弧"><svg><use href="#t-ellarc"/></svg></button>
        <button aria-label="插入块"><svg><use href="#binsert"/></svg></button>
        <button aria-label="创建块"><svg><use href="#bcreate"/></svg></button>
        <button aria-label="点"><svg><use href="#t-point"/></svg></button>
        <button aria-label="图案填充"><svg><use href="#hatch"/></svg></button>
        <button aria-label="渐变色"><svg><use href="#grad"/></svg></button>
        <button aria-label="面域"><svg><use href="#t-region"/></svg></button>
        <button aria-label="表格"><svg><use href="#table"/></svg></button>
        <button class="ta">A</button>
        <button aria-label="添加选定对象"><svg><use href="#t-add"/></svg></button>
      </div>
    </aside>

    <div class="canvas">
      <svg class="drawing">
        <g transform="translate(-35 -202)">
          <g class="dots">
            <path d="M382 522.500h187M345 558.500L483 688M379 522.500l-34 36M517 652.500l-34 36"/>
            <path stroke-dasharray="2 3" d="M569.500 522.500A190 190 0 0 1 517.500 652.500"/>
          </g>
          <path fill="#6d7278" d="M567 520h4v4h-4zM343 557h4v4h-4zM481 687h4v4h-4z"/>
          <path class="hot" d="M379.500 522.500l138 130"/>
          <path class="ink" d="M379.500 522.500A98 98 0 1 0 517.500 652.500"/>
          <path class="ink" d="M376 522.500h7M379.500 519v7"/>
          <path class="ink crisp" d="M469 652.500h97M517.500 604v97M646.500 781v51M646 831.500h51M642.500 826.500h9v9h-9z"/>
          <text x="649" y="777">Y</text><text x="701" y="830">X</text>
          <path class="shadow" d="M291 767l32-42"/>
          <path class="red" d="M289 765l32-42"/>
          <path fill="#f00" d="M333 707l-10 24-4-6-6-2z"/>
        </g>
      </svg>
      <span class="viewlabel">[−][俯视][二维线框]</span>
      <div class="tip angle">43°</div>
      <div class="dynbox"><input value="664.4043" aria-label="距离"></div>
      <div class="tip prompt">指定圆弧的端点(按住 Ctrl 键以切换方向)或<svg viewBox="0 0 11 11"><path fill="#eee" d="M.5.5h10v10H.5z"/><path d="M5.500 2v4M3.500 4.500l2 2 2-2M3 8.500h5"/></svg></div>

      <div class="cube">
        <i class="ring"></i>
        <span class="n">北</span><span class="w">西</span><button class="top"><span>上</span></button><span class="e">东</span><span class="so">南</span>
      </div>
      <button class="wcs">WCS<svg viewBox="0 0 10 6"><path d="M1 .5h8L5 5z"/></svg></button>

      <svg class="navbar" viewBox="0 0 32 212">
        <circle cx="26" cy="5" r="3"/><path d="M24 3l4 4M28 3l-4 4"/>
        <path d="M16 20h10v11a10.500 10.500 0 1 1-10-11z"/><circle cx="16" cy="30" r="6"/><path d="M12 35l-4 4M20 35l4 4"/>
        <path class="fd" d="M13 49h6l-3 3zM13 119h6l-3 3zM13 157h6l-3 3z"/>
        <path d="M4 56.500h25M4 164.500h25" class="ln"/>
        <path d="M11 83l-6-9c-1-2 1-3 3-1l4 4-2-12c0-2 2-2 3 0l2 8V63c0-2 3-2 3 0l1 10 2-9c1-2 3-1 3 1l-1 10 2-5c1-1 2-1 2 1l-3 12-2 1z"/>
        <path d="M5 90l14 14M19 90L5 104"/><path class="fd" d="M4 89h5l-5 5zM20 89v5l-5-5zM4 105v-5l5 5z"/><circle cx="20" cy="104" r="5"/><path d="M24 108l4 4" class="th"/>
        <path d="M14 148v-16h-3l5-5 4 5h-3v16zM13 136c-10 1-12 6-2 8M18 136c11 1 12 8-4 8"/><path class="fd" d="M7 143l5-3v7z"/>
        <path d="M5 170h6v6H5zM13 170h6v6h-6zM21 170h6v6h-6zM5 179h16v13H5z"/><path class="fd" d="M9 182l7 4-7 4z"/>
        <circle cx="26" cy="206" r="3"/><path d="M24 206h4"/>
      </svg>

      <div class="command">
        <p class="old">当前线宽为<tt> 0.0000</tt></p>
        <p class="mid">指定下一个点或<tt> [</tt>圆弧<tt>(A)/</tt>半宽<tt>(H)/</tt>长度<tt>(L)/</tt>放弃<tt>(U)/</tt>宽度<tt>(W)]: a</tt></p>
        <p>指定圆弧的端点<tt>(</tt>按住<tt> Ctrl </tt>键以切换方向<tt>)</tt>或</p>
        <div class="cmdline">
          <span class="cgrip"></span>
          <button class="cx" aria-label="关闭命令行"><svg><use href="#close"/></svg></button>
          <button class="cw" aria-label="自定义"><svg><use href="#wrench"/></svg></button>
          <div class="cin">
            <svg class="fade"><use href="#t-pline"/></svg><i class="dd lg"></i>
            <b>PLINE</b><tt>[</tt>
            <button>角度<tt>(<em>A</em>)</tt></button><button>圆心<tt>(<em>CE</em>)</tt></button><button>方向<tt>(<em>D</em>)</tt></button><button>半宽<tt>(<em>H</em>)</tt></button><button>直线<tt>(<em>L</em>)</tt></button><button>半径<tt>(<em>R</em>)</tt></button><button>第二个点<tt>(<em>S</em>)</tt></button><button>放弃<tt>(<em>U</em>)</tt></button><button>宽度<tt>(<em>W</em>)</tt></button><tt>]:</tt>
            <input aria-label="命令"><i class="up"></i>
          </div>
        </div>
      </div>
      <div class="ime">EN<svg viewBox="0 0 12 12"><path d="M5 1c5 1 6 4 5 6-1 3-5 4-8 2 4 0 6-4 3-8z"/></svg>简</div>
    </div>
  </main>

  <footer class="bottom">
    <nav class="layouts">
      <button class="on">模型</button><button>布局1</button><button>布局2</button><button class="lplus" aria-label="新布局">+</button>
    </nav>
    <div class="status">
      <output class="coords">-935.4657, 1081.4249, 0.0000</output>
      <div class="sg"><button class="model">模型</button></div>
      <div class="sg"><button aria-label="栅格"><svg><use href="#s-grid"/></svg></button><button aria-label="捕捉"><svg><use href="#s-snap"/></svg></button><button class="ar" aria-label="捕捉选项"><i class="dd lg"></i></button></div>
      <div class="sg"><button aria-label="推断约束"><svg><use href="#s-infer"/></svg></button></div>
      <div class="sg"><button class="on" aria-label="动态输入"><svg><use href="#s-dyn"/></svg></button></div>
      <div class="sg"><button aria-label="正交"><svg><use href="#s-ortho"/></svg></button><button aria-label="极轴"><svg><use href="#s-polar"/></svg></button><button class="ar" aria-label="极轴选项"><i class="dd lg"></i></button><button aria-label="等轴测"><svg><use href="#s-iso"/></svg></button><button class="ar" aria-label="等轴测选项"><i class="dd lg"></i></button></div>
      <div class="sg"><button class="on" aria-label="对象捕捉追踪"><svg><use href="#s-otrack"/></svg></button><button aria-label="对象捕捉"><svg><use href="#s-osnap"/></svg></button><button class="ar" aria-label="捕捉设置"><i class="dd lg"></i></button></div>
      <div class="sg"><button aria-label="线宽"><svg><use href="#s-lw"/></svg></button></div>
      <div class="sg"><button class="on" aria-label="透明度"><svg><use href="#s-trans"/></svg></button></div>
      <div class="sg"><button aria-label="选择循环"><svg><use href="#s-cycle"/></svg></button></div>
      <div class="sg"><button aria-label="三维对象捕捉"><svg><use href="#s-3dos"/></svg></button><button class="ar" aria-label="三维捕捉选项"><i class="dd lg"></i></button></div>
      <div class="sg roomy"><button class="on" aria-label="动态UCS"><svg><use href="#s-ucs"/></svg></button><button aria-label="选择过滤"><svg><use href="#s-selfil"/></svg></button><button class="ar" aria-label="过滤选项"><i class="dd lg"></i></button><button class="on" aria-label="小控件"><svg><use href="#s-gizmo"/></svg></button><button class="ar" aria-label="小控件选项"><i class="dd lg"></i></button></div>
      <div class="sg"><button class="on" aria-label="注释可见性"><svg><use href="#s-annv"/></svg></button><button aria-label="自动缩放"><svg><use href="#s-anna"/></svg></button><button aria-label="注释比例"><svg><use href="#s-ann"/></svg></button><button class="zoomtxt">1:1 / 100%<i class="dd lg"></i></button></div>
      <div class="sg"><button aria-label="切换工作空间"><svg><use href="#s-gear"/></svg></button><button class="ar" aria-label="工作空间选项"><i class="dd lg"></i></button></div>
      <div class="sg"><button aria-label="注释监视器"><svg><use href="#s-plus"/></svg></button></div>
      <div class="sg"><button class="units"><svg><use href="#s-rule"/></svg><span>小数</span><i class="dd lg"></i></button></div>
      <div class="sg roomy"><button aria-label="快捷特性"><svg><use href="#s-qp"/></svg></button><button aria-label="锁定界面"><svg><use href="#s-lock"/></svg></button><button class="ar" aria-label="锁定选项"><i class="dd lg"></i></button></div>
      <div class="sg pair"><button aria-label="隔离对象"><svg><use href="#s-iso2"/></svg></button><button class="on" aria-label="硬件加速"><svg><use href="#s-hw"/></svg></button></div>
      <div class="sg"><button aria-label="全屏"><svg><use href="#s-full"/></svg></button></div>
      <div class="sg"><button aria-label="自定义"><svg><use href="#s-menu"/></svg></button></div>
    </div>
    <div class="mark">
      <svg viewBox="0 0 44 40"><path fill="#1a6fae" d="M44 0C20 0 2 14 2 24c0 5 5 7 10 5-4-8 8-20 32-29z"/><path fill="#23924a" d="M17 17c10-4 23-3 23 4 0 9-16 17-36 19 14-4 24-10 25-16 0-4-5-7-12-7z"/><path fill="#2a63a8" d="M11 17c8 0 12 4 10 8s-8 6-13 3c6 0 8-6 3-11z"/><path fill="#a8a83a" d="M4 40c14-2 24-7 28-12-6 8-16 11-28 12z"/></svg>
      <div><strong>极光下载站</strong><small>www.xz7.com</small></div>
    </div>
  </footer>
</div>
</body>
</html>
```
FILE: styles.css
```css
* { box-sizing: border-box; }
html, body { margin: 0; height: 100%; }
body {
  display: flex;
  background: #f4f4f4;
  padding: 0 2px;
  border-bottom: 3px solid #46484d;
  font: 12px/16px "Noto Sans", "Noto Sans CJK SC", sans-serif;
  color: #f0f0f0;
  overflow: hidden;
}
button {
  font: inherit;
  color: inherit;
  background: none;
  border: 0;
  padding: 0;
  display: flex;
  align-items: center;
  justify-content: center;
  white-space: nowrap;
}
input, select { font: inherit; color: inherit; border: 0; outline: 0; background: none; min-width: 0; padding: 0; }
select { appearance: none; }
svg { width: 16px; height: 16px; flex: none; display: block; overflow: visible; }
tt { font: 12px/16px "Liberation Mono", monospace; white-space: pre; }
.sprite { position: absolute; width: 0; height: 0; }

/* icon paint */
.s { fill: none; stroke: #dcdcdc; }
.s2 { fill: none; stroke: #dcdcdc; stroke-width: 2; }
.sf { fill: none; stroke: #fff; }
.b { fill: none; stroke: #6fc3ff; }
.fw { fill: #dcdcdc; }
.ff { fill: #fff; }
.fb { fill: #7cc7ff; }
.fy { fill: #ffd280; }
.fr { fill: #f0565c; }
.fg { fill: #a2a5ab; }

/* arrows */
.dd, .up { width: 0; height: 0; flex: none; border: 3px solid transparent; border-top-color: #dcdcdc; border-bottom-width: 0; }
.dd.lg { border-width: 4px 4px 0; }
.dd.dim { border-top-color: #636973; }
.up { border-width: 0 4px 4px; border-bottom-color: #555; }

.window {
  flex: 1;
  min-width: 0;
  display: flex;
  flex-direction: column;
  border: 1px solid #0a8fd6;
  background: #222933;
}

/* title bar */
.titlebar { display: flex; height: 29px; align-items: center; }
.quick, .account, .winbtns { display: flex; align-items: center; }
.quick { gap: 8px; padding-left: 7px; }
.app { gap: 4px; margin-right: 10px; }
.undo { gap: 6px; margin-right: -2px; }
.more { margin-left: 4px; }
.bar { position: relative; margin-top: 3px; }
.bar::before { content: ""; position: absolute; left: -4px; top: -7px; width: 8px; height: 1px; background: #dcdcdc; }
.share { gap: 5px; color: #9fd6ff; }
.title { display: flex; gap: 16px; margin: 0 auto; font-size: 13px; font-weight: 400; line-height: 16px; padding-bottom: 2px; }
.account { gap: 8px; padding-right: 6px; }
.rt { border: 4px solid transparent; border-left-color: #dcdcdc; border-right: 0; margin-right: -2px; }
.search { width: 178px; height: 20px; background: #464f61; padding: 0 4px; font-style: italic; }
.search::placeholder { color: #b9bdc5; opacity: 1; }
.login { gap: 5px; }
.login .dd { margin-left: 56px; }
.appst, .help { gap: 5px; }
.account .dd { margin-top: 1px; }
.vsep { width: 1px; height: 18px; background: #4a5261; margin: 0 2px; }
.help b { width: 16px; height: 16px; border-radius: 8px; background: #dcdcdc; color: #222933; }
.winbtns { gap: 9px; margin-left: 59px; }

/* menu bar */
.menubar { display: flex; gap: 25px; height: 19px; padding-left: 17px; border-bottom: 1px solid #3b4453; color: #b6b9be; }
.docbtns { display: flex; margin-left: auto; gap: 2px; padding-right: 2px; }

/* ribbon tabs */
.tabs { display: flex; gap: 2px; padding: 4px 0 0 7px; height: 24px; color: #b6b9be; }
.tabs button { padding: 1px 9px 0; }
.tabs .on { background: #3b4453; color: #fff; }
.tabs .wide { font-size: 13px; }
.tabs .fold { gap: 4px; padding-left: 20px; }
.fold span { width: 15px; height: 8px; background: #f0f0f0; display: flex; align-items: center; justify-content: center; }
.fold .up { border-width: 0 3px 3px; }

/* ribbon */
.ribbon { display: flex; height: 99px; margin: 0 2px 0 4px; background: #3b4453; }
.panel { display: flex; flex-direction: column; border-right: 1px solid #222933; position: relative; }
.panel:last-child { border: 0; }
.pbody { display: flex; height: 77px; padding-top: 5px; }
.ptitle { display: flex; align-items: center; justify-content: center; gap: 6px; height: 22px; padding-top: 2px; }
.big { width: 42px; flex-direction: column; justify-content: flex-start; padding-top: 3px; }
.big svg { width: 32px; height: 32px; margin-bottom: 4px; }
.big .dd { margin-top: 3px; }
.letter { font: 36px/32px "Liberation Sans", sans-serif; height: 32px; margin-bottom: 4px; color: #dcdcdc; }
.col { display: flex; flex-direction: column; }
.row { display: flex; align-items: center; height: 24px; }
.tool { height: 24px; gap: 5px; justify-content: flex-start; padding: 0 4px; }
.combo { display: flex; align-items: center; height: 23px; background: #4f5b6e; border: 1px solid #2c343f; padding-right: 1px; }
.combo select { flex: 1; }
.sw { width: 14px; height: 14px; background: #fff; border: 1px solid #000; }
.p-draw { width: 211px; }
.p-draw .big { width: 41px; }
.p-draw .col { padding-left: 4px; }
.p-modify { width: 227px; }
.p-modify .pbody { gap: 6px; padding-left: 3px; }
.c-drop .dd { margin-left: 6px; }
.c-drop .near .dd { margin-left: 2px; }
.p-anno { width: 156px; }
.p-anno .pbody { padding-left: 4px; }
.c-anno { padding-left: 2px; }
.c-anno .dd { margin-left: 3px; }
.p-layer { width: 252px; }
.c-layer .combo { width: 208px; margin-bottom: 1px; padding-left: 2px; gap: 3px; }
.c-layer .sw { margin: 0 2px; }
.c-layer .row { margin-left: -1px; }
.p-block { width: 134px; }
.p-prop { width: 244px; }
.c-prop svg { margin-right: 2px; }
.c-prop .combo { width: 180px; }
.c-prop .color { width: 16px; height: 16px; margin: 0 11px 0 12px; border-color: #a9adb4; }
.rule { width: 64px; height: 1px; background: #fff; margin: 0 2px 0 3px; }
.launch { position: absolute; right: 4px; bottom: 6px; width: 8px; height: 8px; }
.p-group { width: 68px; }
.sel { background: #44658a; outline: 1px solid #6fc3ff; outline-offset: -1px; }
.p-util { width: 77px; }
.p-util .pbody { padding-left: 4px; }
.p-util .big { margin-right: 6px; }
.p-util .big svg { width: 28px; }
.p-clip { width: 76px; }
.p-clip .pbody { padding-left: 3px; gap: 6px; }

/* document tabs */
.doctabs { display: flex; height: 30px; margin: 0 3px; padding: 4px 0 0 19px; border-bottom: 4px solid #3b4453; }
.dtab { width: 125px; justify-content: flex-start; padding-left: 13px; background: #2e3642; border-radius: 8px 8px 0 0; color: #b6b9be; }
.cur { background: #3b4453; color: #fff; font-weight: 700; justify-content: space-between; padding: 0 13px 0 12px; }
.cur span { font-size: 12px; color: #b6b9be; }
.dplus { width: 23px; height: 15px; margin: 4px 0 0 5px; background: #2e3642; border-radius: 4px 8px 8px 8px; font-size: 16px; font-weight: 700; color: #b6b9be; }

/* work area */
.work { flex: 1; min-height: 0; display: flex; }
.dock { width: 29px; margin-left: 3px; padding: 0 5px 0 1px; background: #3b4453; }
.palette { display: flex; flex-direction: column; border: 1px solid #252d38; border-width: 0 1px 1px 0; }
.palette button { height: 22px; }
.grip { height: 5px; margin: 2px 6px 2px 3px; background: conic-gradient(at 1px 1px, transparent 75%, #dcdcdc 0) 0 0 / 2px 2px; }
.ta { font-size: 18px; font-weight: 500; color: #dcdcdc; }
.canvas { flex: 1; position: relative; background: #212830; overflow: hidden; }
.drawing { position: absolute; inset: 0; width: 100%; height: 100%; }
.dots { fill: none; stroke: #9a9da1; stroke-dasharray: 1 3; }
.ink { fill: none; stroke: #fff; }
.crisp { shape-rendering: crispEdges; }
.hot { stroke: #f0a922; stroke-dasharray: 16 10; }
.red { stroke: #f00; stroke-width: 3; }
.shadow { stroke: #11151a; stroke-width: 4; }
.drawing text { fill: #fff; font: 300 19px Lato, sans-serif; }
.viewlabel { position: absolute; left: 4px; top: 5px; color: #000; }
.tip { position: absolute; background: #999; border: 1px solid #000; color: #111; }
.angle { left: 503px; top: 380px; width: 34px; height: 22px; padding: 2px 3px; }
.prompt { left: 498px; top: 467px; width: 268px; height: 25px; padding: 2px 3px; display: flex; justify-content: space-between; }
.prompt svg { align-self: flex-end; width: 11px; height: 11px; fill: none; stroke: #555; }
.dynbox { position: absolute; left: 346px; top: 411px; width: 67px; height: 22px; padding: 2px 3px; background: #fff; border: 1px solid #000; }
.dynbox input { display: block; width: 53px; height: 16px; background: #0078d7; color: #fff; }

/* view cube */
.cube { position: absolute; right: 20px; top: 16px; width: 132px; height: 134px; display: grid; place-items: center; font-size: 18px; line-height: 20px; color: #b5b7ba; }
.cube > * { position: absolute; }
.ring { width: 120px; height: 120px; border: 12px solid #42494f; border-radius: 60px; }
.n { top: 0; }
.so { bottom: 0; }
.w { left: 0; }
.e { right: 0; }
.top { width: 52px; height: 52px; background: #aeb0b2; outline: 1px solid #62676c; outline-offset: -1px; color: #444b52; font-size: 28px; }
.top span { width: 32px; height: 32px; line-height: 28px; background: #a0a7ad; }
.wcs { position: absolute; right: 62px; top: 169px; width: 48px; height: 18px; gap: 6px; border-radius: 4px; background: #9597a6; color: #4d515c; font-size: 11px; }
.wcs svg { width: 10px; height: 6px; fill: none; stroke: #c6c8d4; }
.navbar { position: absolute; right: 7px; top: 212px; width: 32px; height: 212px; background: #5c6062; border-radius: 4px; box-shadow: 0 0 2px 1px #14181d; fill: none; stroke: #454a50; }
.navbar .fd { fill: #454a50; stroke: none; }
.navbar .ln { stroke: #6a6e70; }
.navbar .th { stroke-width: 3; }

/* command window */
.command { position: absolute; left: 377px; right: 380px; bottom: 1px; display: flex; flex-direction: column; align-items: flex-start; gap: 4px; font-size: 13px; }
.command p { margin: 0 0 0 62px; padding: 0 2px; line-height: 16px; height: 16px; background: #5b5d5e; border-radius: 2px; color: #fff; white-space: pre; }
.command .mid { color: #d6d6d6; }
.command .old { color: #b4b5b6; }
.cmdline { display: flex; align-items: center; align-self: stretch; height: 26px; background: #2e3642; }
.cgrip { width: 6px; height: 18px; margin-left: 4px; background: conic-gradient(at 2px 2px, transparent 75%, #dcdcdc 0) 0 0 / 3px 3px; }
.cx { width: 18px; }
.cw { width: 28px; padding-left: 4px; }
.cx svg { width: 14px; height: 14px; }
.cin { flex: 1; display: flex; align-items: center; gap: 3px; height: 25px; padding: 0 3px; background: #fff; color: #111; }
.cin .fade { width: 14px; margin-right: 1px; }
.cin .dd { border-top-color: #666; }
.cin b { font: 700 12px/16px "Liberation Mono", monospace; margin: 0 2px; }
.cin > tt { margin-right: -2px; }
.cin button { height: 18px; padding: 0 1px; border-radius: 3px; background: #cfcfcf; }
.cin em { font-style: normal; color: #1414f0; }
.cin input { flex: 1; }
.ime { position: absolute; left: 1148px; bottom: 12px; display: flex; align-items: center; justify-content: center; gap: 4px; width: 60px; height: 25px; border-radius: 5px; background: #fff; box-shadow: 0 1px 3px 1px #666; color: #222; font-size: 13px; }
.ime svg { width: 12px; height: 12px; fill: none; stroke: #333; }

/* layout tabs and status bar */
.bottom { position: relative; display: flex; justify-content: space-between; height: 32px; margin-left: 3px; border-top: 1px solid #454c57; }
.layouts { display: flex; gap: 2px; height: 18px; padding-left: 10px; color: #b6b9be; }
.layouts button { width: 52px; background: #2e3642; border-radius: 2px 2px 8px 8px; }
.layouts .on { width: 48px; background: #3b4453; color: #fff; font-weight: 700; }
.layouts .lplus { width: 24px; font-size: 16px; font-weight: 700; }
.status { display: flex; gap: 2px; height: 24px; margin: 1px 4px 0 0; }
.sg, .coords { display: flex; background: #3b4453; }
.coords { width: 180px; align-items: center; justify-content: flex-end; padding-right: 5px; color: #c6c9ce; }
.sg button { width: 24px; }
.sg .on { width: 22px; margin: 1px 0; background: #5e8dc1; }
.sg .model { width: 32px; font-weight: 700; }
.sg .ar { width: 16px; }
.roomy .ar { width: 18px; }
.pair { gap: 4px; padding-right: 2px; }
.sg .zoomtxt { width: 76px; gap: 6px; }
.sg .units { width: 98px; justify-content: space-between; padding: 0 4px; }
.units span { margin-right: 30px; }

/* site mark */
.mark { position: absolute; right: 2px; top: -14px; display: flex; opacity: .8; pointer-events: none; }
.mark svg { width: 44px; height: 40px; }
.mark div { display: flex; flex-direction: column; }
.mark strong { font-size: 21px; line-height: 21px; color: #1257a0; }
.mark small { font: 700 17px/20px "Liberation Sans", sans-serif; color: #17783f; }
```
